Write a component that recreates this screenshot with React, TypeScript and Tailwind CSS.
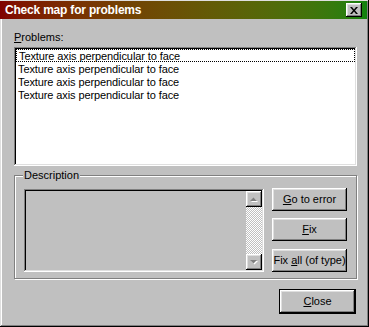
const raised =
  "shadow-[inset_-1px_-1px_#000,inset_1px_1px_#fff,inset_-2px_-2px_#808080,inset_2px_2px_#dfdfdf]";
const sunken =
  "shadow-[inset_-1px_-1px_#fff,inset_1px_1px_#808080,inset_-2px_-2px_#dfdfdf,inset_2px_2px_#000]";

const rows = [
  "Texture axis perpendicular to face",
  "Texture axis perpendicular to face",
  "Texture axis perpendicular to face",
  "Texture axis perpendicular to face",
];

function Arrow({ down }: { down?: boolean }) {
  return (
    <div className={`flex h-[16px] w-[16px] items-center justify-center bg-[#c0c0c0] ${raised}`}>
      <svg width="8" height="5" viewBox="0 0 8 5">
        {down ? (
          <>
            <path d="M1 1h7L4.5 4.5z" fill="#fff" />
            <path d="M0 0h7L3.5 3.5z" fill="#808080" />
          </>
        ) : (
          <>
            <path d="M1 5h7L4.5 1.5z" fill="#fff" />
            <path d="M0 4h7L3.5 0.5z" fill="#808080" />
          </>
        )}
      </svg>
    </div>
  );
}

function Button({ children, className = "" }: { children: React.ReactNode; className?: string }) {
  return (
    <button
      type="button"
      className={`flex h-[23px] w-[75px] items-center justify-center bg-[#c0c0c0] text-[11px] text-black ${raised} ${className}`}
    >
      <span>{children}</span>
    </button>
  );
}

export default function App() {
  return (
    <div
      className="flex h-[327px] w-[369px] flex-col bg-[#c0c0c0] shadow-[inset_-1px_-1px_#000,inset_1px_1px_#dfdfdf,inset_-2px_-2px_#808080,inset_2px_2px_#fff]"
      style={{ fontFamily: '"Liberation Sans", Arial, sans-serif' }}
    >
      {/* title bar */}
      <div className="mr-[2px] mt-[1px] flex h-[18px] items-center justify-between bg-linear-to-r from-[#800000] to-[#0f820f] pl-[5px] pr-[5px]">
        <span className="text-[12px] font-bold tracking-[-0.2px] text-white">Check map for problems</span>
        <div className={`flex h-[14px] w-[16px] items-center justify-center bg-[#c0c0c0] ${raised}`}>
          <svg width="8" height="7" viewBox="0 0 8 7">
            <path d="M0 0h2l2 2.5L6 0h2L5 3.5 8 7H6L4 4.5 2 7H0l3-3.5z" fill="#000" />
          </svg>
        </div>
      </div>

      <div className="flex flex-1 flex-col pl-[14px] pr-[12px] pt-[12px]">
        <div className="h-[13px] text-[11px] leading-[13px] text-black">
          <span className="underline underline-offset-1">P</span>roblems:
        </div>

        {/* problems list */}
        <div className={`mt-[3px] h-[119px] bg-white p-[2px] ${sunken}`}>
          {rows.map((r, i) => (
            <div
              key={i}
              className={`h-[13px] pl-[2px] text-[11px] tracking-[-0.1px] text-black ${
                i === 0 ? "border border-dotted border-black pl-[1px] leading-[12px]" : "leading-[14px]"
              }`}
            >
              {r}
            </div>
          ))}
        </div>

        {/* description group */}
        <div className="relative mt-[9px] flex h-[104px] gap-[8px] border border-[#808080] pl-[9px] pt-[12px] shadow-[1px_1px_#fff,inset_1px_1px_#fff]">
          <span className="absolute left-[8px] top-[-7px] bg-[#c0c0c0] px-[1px] text-[11px] leading-[13px] text-black">
            Description
          </span>
          <div className={`mt-[1px] flex h-[83px] w-[240px] justify-end bg-[#c0c0c0] p-[2px] ${sunken}`}>
            <div className="flex w-[16px] flex-col justify-between [background-image:repeating-conic-gradient(#fff_0_25%,#c0c0c0_0_50%)] [background-size:2px_2px]">
              <Arrow />
              <Arrow down />
            </div>
          </div>
          <div className="flex flex-col gap-[7px]">
            <Button>
              <span className="underline underline-offset-1">G</span>o to error
            </Button>
            <Button>
              <span className="underline underline-offset-1">F</span>ix
            </Button>
            <Button className="mt-[1px]">
              Fix <span className="underline underline-offset-1">a</span>ll (of type)
            </Button>
          </div>
        </div>

        <div className="mt-[10px] flex justify-end pr-[1px]">
          <div className="border border-black">
            <Button className="h-[21px] w-[73px]">
              <span className="underline underline-offset-1">C</span>lose
            </Button>
          </div>
        </div>
      </div>
    </div>
  );
}
